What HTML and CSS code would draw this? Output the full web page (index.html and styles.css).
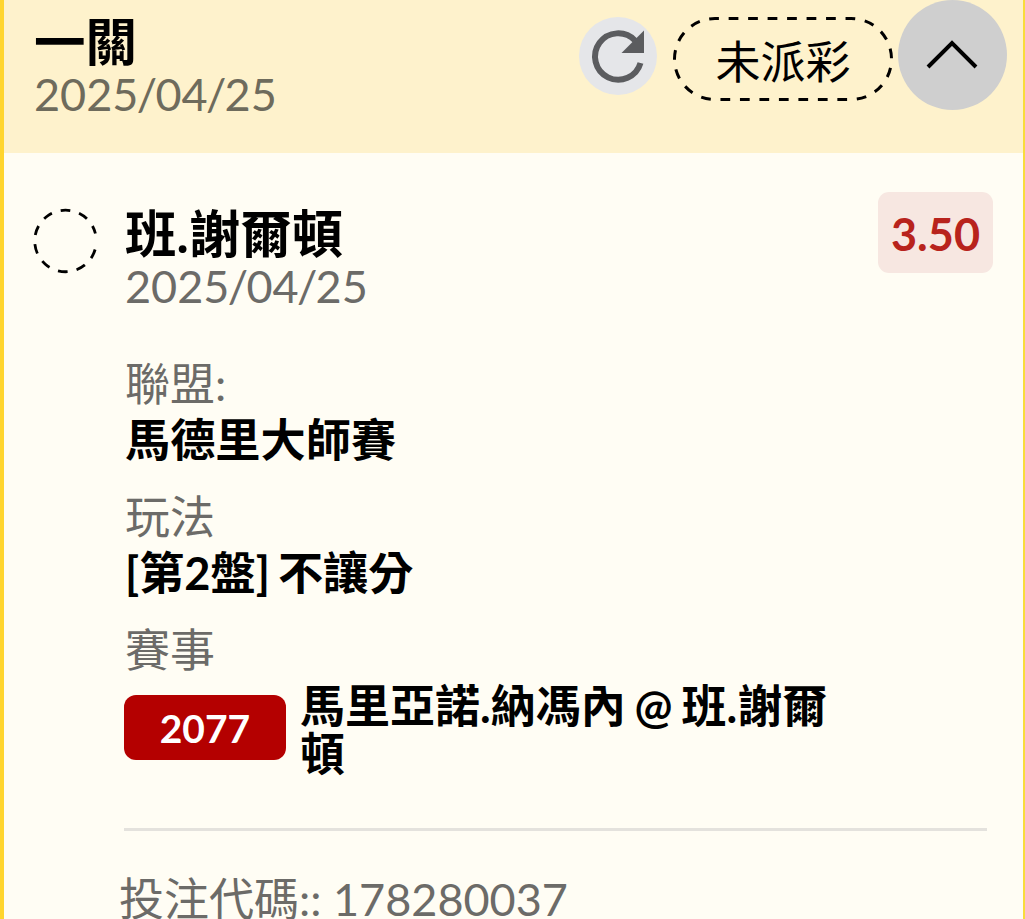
FILE: index.html
```html
<!DOCTYPE html>
<html lang="zh-Hant">
<head>
    <meta charset="UTF-8">
    <title>投注紀錄</title>
    <link rel="stylesheet" href="styles.css">
</head>
<body>
    <div class="ticket">
        <div class="ticket-header">
            <div class="ticket-heading">
                <div class="title">一關</div>
                <div class="date">2025<span class="slash">/</span>04<span class="slash">/</span>25</div>
            </div>
            <div class="header-actions">
                <button type="button" class="refresh-btn">
                    <svg width="78" height="78" viewBox="0 0 78 78">
                        <path d="M61.500 46A23.200 23.200 0 1 1 56 23.500" fill="none" stroke="#5b5c5f" stroke-width="6"/>
                        <path d="M65 13.500V36H42.500z" fill="#5b5c5f"/>
                    </svg>
                </button>
                <div class="status">
                    <svg class="status-border" width="220" height="84" viewBox="0 0 220 84">
                        <rect x="1.500" y="1.500" width="217" height="81" rx="40.500" pathLength="540" fill="none" stroke="#000" stroke-width="3" stroke-dasharray="10 10" stroke-dashoffset="6"/>
                    </svg>
                    <span>未派彩</span>
                </div>
                <button type="button" class="toggle-btn">
                    <svg width="109" height="110" viewBox="0 0 109 110">
                        <path d="M30 67L54 43L78 67" fill="none" stroke="#000" stroke-width="4"/>
                    </svg>
                </button>
            </div>
        </div>

        <div class="ticket-body">
            <svg class="pending-icon" width="66" height="66" viewBox="0 0 66 66">
                <path d="M62.100 41.500A30.800 30.800 0 1 1 62.400 25.500" fill="none" stroke="#000" stroke-width="2.800" stroke-dasharray="9.600 9.160"/>
            </svg>
            <div class="bet">
                <div class="bet-top">
                    <div>
                        <div class="title">班.謝爾頓</div>
                        <div class="date">2025<span class="slash">/</span>04<span class="slash">/</span>25</div>
                    </div>
                    <div class="odds">3.50</div>
                </div>

                <div class="info">
                    <div class="label">聯盟:</div>
                    <div class="value">馬德里大師賽</div>
                </div>
                <div class="info">
                    <div class="label">玩法</div>
                    <div class="value">[第2盤] 不讓分</div>
                </div>
                <div class="info">
                    <div class="label">賽事</div>
                    <div class="match">
                        <span class="match-no">2077</span>
                        <span class="match-name">馬里亞諾.納馮內 @ 班.謝爾頓</span>
                    </div>
                </div>

                <div class="bet-code">投注代碼:: 178280037</div>
            </div>
        </div>
    </div>
</body>
</html>
```
FILE: styles.css
```css
* {
    box-sizing: border-box;
}

body {
    margin: 0;
    height: 919px;
    overflow: hidden;
    font-family: Lato, "Noto Sans CJK TC", sans-serif;
    font-size: 45px;
    color: #000;
    background-color: #fffdf4;
}

button {
    padding: 0;
    border: none;
    border-radius: 50%;
}

svg {
    display: block;
}

.ticket {
    height: 919px;
    overflow: hidden;
    border-left: 4px solid #ffd52e;
    border-right: 2px solid #f8dc3c;
}

.ticket-header {
    display: flex;
    justify-content: space-between;
    height: 153px;
    padding: 0 16px 0 30px;
    background-color: #fef2cc;
}

.ticket-heading {
    padding-top: 14px;
}

.title {
    font-size: 51.5px;
    font-weight: 700;
    line-height: 54px;
}

.date {
    line-height: 53px;
    color: #6e6b5c;
}

.ticket-body .date {
    color: #6c6b68;
}

.slash {
    margin: 0 -1.7px;
}

.header-actions {
    display: flex;
    align-items: flex-start;
}

.refresh-btn {
    width: 78px;
    height: 78px;
    margin: 17px 16px 0 0;
    background-color: #e5e6e9;
}

.status {
    position: relative;
    width: 220px;
    height: 84px;
    margin: 17px 5px 0 0;
    line-height: 90px;
    text-align: center;
}

.status-border {
    position: absolute;
    top: 0;
    left: 0;
}

.toggle-btn {
    width: 109px;
    height: 110px;
    background-color: #cfcfcf;
}

.ticket-body {
    display: flex;
    padding: 39px 30px 0 29px;
}

.pending-icon {
    flex: none;
    margin: 16px 25px 0 0;
}

.bet {
    flex: 1;
}

.bet-top {
    display: flex;
    justify-content: space-between;
    padding: 14px 0 0 1px;
    margin-bottom: 44px;
}

.odds {
    width: 115px;
    height: 81px;
    margin-top: -14px;
    border-radius: 11px;
    background-color: #f7e7e1;
    color: #b8231c;
    font-weight: 700;
    line-height: 84px;
    text-align: center;
}

.info {
    height: 133px;
}

.label {
    padding-left: 1px;
    line-height: 55px;
    color: #6c6b68;
}

.value {
    padding-left: 1px;
    font-size: 45.2px;
    font-weight: 700;
    line-height: 55px;
    word-spacing: -3px;
}

.match {
    display: flex;
    align-items: center;
    gap: 14px;
}

.match-no {
    flex: none;
    width: 162px;
    height: 65px;
    margin-bottom: 1px;
    border-radius: 12px;
    background-color: #b40000;
    color: #fff;
    font-size: 39px;
    font-weight: 700;
    line-height: 67px;
    text-align: center;
}

.match-name {
    width: 540px;
    padding-top: 4px;
    font-weight: 700;
    line-height: 48px;
    word-spacing: -2px;
}

.bet-code {
    width: 863px;
    margin-top: 72px;
    padding-top: 40px;
    border-top: 3px solid #e4e2dd;
    line-height: 56px;
    color: #6c6b68;
    text-indent: -5px;
}
```
